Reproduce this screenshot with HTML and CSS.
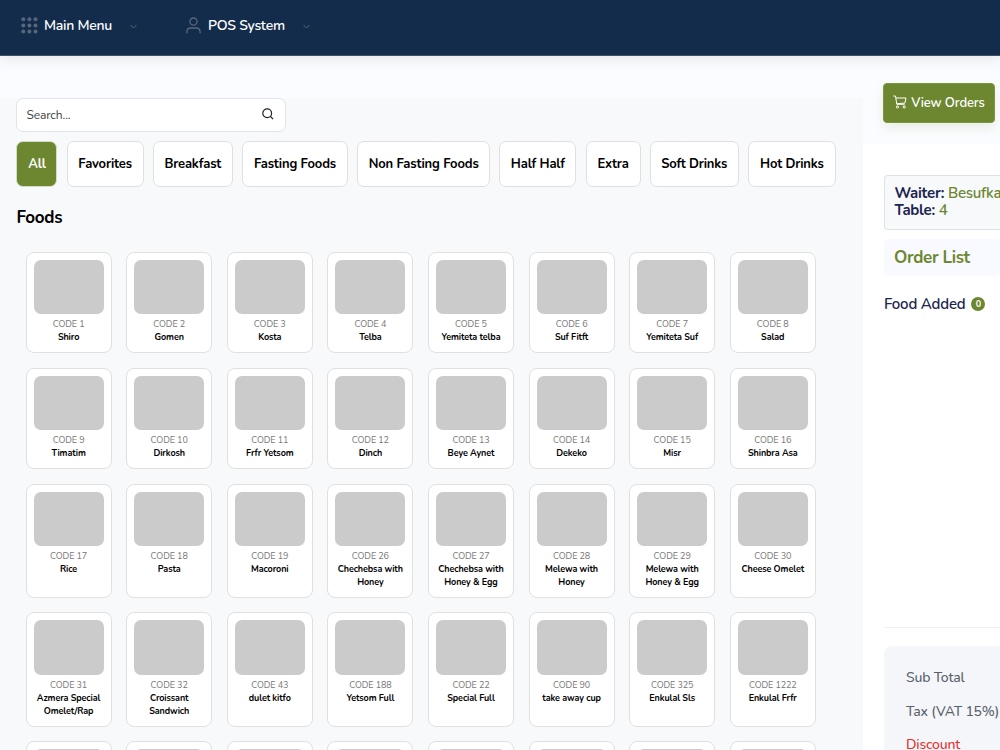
FILE: index.html
```html
<!DOCTYPE html>
<html lang="en">
<head>
  <meta charset="UTF-8">
  <meta name="viewport" content="width=device-width, initial-scale=1.0">
  <title>POS System</title>
  <link rel="stylesheet" href="styles.css">
</head>
<body>
  <header class="topbar">
    <a class="nav-item nav-menu">
      <svg class="nav-icon" width="17" height="17" viewBox="0 0 17 17" fill="currentColor">
        <circle cx="2.3" cy="2.3" r="2"/><circle cx="8.4" cy="2.3" r="2"/><circle cx="14.5" cy="2.3" r="2"/>
        <circle cx="2.3" cy="8.4" r="2"/><circle cx="8.4" cy="8.4" r="2"/><circle cx="14.5" cy="8.4" r="2"/>
        <circle cx="2.3" cy="14.5" r="2"/><circle cx="8.4" cy="14.5" r="2"/><circle cx="14.5" cy="14.5" r="2"/>
      </svg>
      <span class="nav-text">Main Menu</span>
      <svg class="chevron" width="7" height="5" viewBox="0 0 7 5" fill="none" stroke="currentColor"><path d="M.5 1l3 3 3-3"/></svg>
    </a>
    <a class="nav-item nav-pos">
      <svg class="nav-icon" width="15" height="17" viewBox="0 0 15 17" fill="none" stroke="currentColor" stroke-width="1.3">
        <circle cx="7.5" cy="4.6" r="3.6"/>
        <path d="M.9 16.2v-1.4a4 4 0 0 1 4-3.8h5.2a4 4 0 0 1 4 3.8v1.4"/>
      </svg>
      <span class="nav-text">POS System</span>
      <svg class="chevron" width="7" height="5" viewBox="0 0 7 5" fill="none" stroke="currentColor"><path d="M.5 1l3 3 3-3"/></svg>
    </a>
  </header>

  <div class="page">
    <main class="menu">
      <div class="search">
        <span>Search...</span>
        <svg width="12" height="12" viewBox="0 0 12 12" fill="none" stroke="#222" stroke-width="1.2">
          <circle cx="5.2" cy="5.2" r="4.4"/><path d="M8.5 8.5l2.6 2.6"/>
        </svg>
      </div>

      <div class="tabs">
        <button class="tab active">All</button>
        <button class="tab">Favorites</button>
        <button class="tab">Breakfast</button>
        <button class="tab">Fasting Foods</button>
        <button class="tab">Non Fasting Foods</button>
        <button class="tab">Half Half</button>
        <button class="tab">Extra</button>
        <button class="tab">Soft Drinks</button>
        <button class="tab">Hot Drinks</button>
      </div>

      <h1 class="menu-title">Foods</h1>
      <div class="foods" id="foods"></div>
    </main>

    <aside class="sidebar">
      <div class="actions">
        <button class="view-orders">
          <svg width="14" height="14" viewBox="0 0 14 14" fill="none" stroke="#fff" stroke-width="1">
            <path d="M.4 1h2.1l1.3 8.3h7.8M3 3h10l-1.1 5.1-8.2.6"/>
            <circle cx="4.4" cy="11.9" r="1.1"/><circle cx="11.2" cy="11.9" r="1.1"/>
          </svg>
          <span>View Orders</span>
        </button>
      </div>
      <div class="order">
        <div class="waiter">
          <div>Waiter: <span>Besufkad</span></div>
          <div>Table: <span>4</span></div>
        </div>
        <h2 class="order-title">Order List</h2>
        <div class="added">Food Added <span class="badge">0</span></div>
        <div class="totals">
          <div>Sub Total</div>
          <div class="tax">Tax (VAT 15%)</div>
          <div class="discount">Discount</div>
        </div>
      </div>
    </aside>
  </div>

  <script>
    const foods = [
      [1, 'Shiro'], [2, 'Gomen'], [3, 'Kosta'], [4, 'Telba'],
      [5, 'Yemiteta telba'], [6, 'Suf Fitft'], [7, 'Yemiteta Suf'], [8, 'Salad'],
      [9, 'Timatim'], [10, 'Dirkosh'], [11, 'Frfr Yetsom'], [12, 'Dinch'],
      [13, 'Beye Aynet'], [14, 'Dekeko'], [15, 'Misr'], [16, 'Shinbra Asa'],
      [17, 'Rice'], [18, 'Pasta'], [19, 'Macoroni'], [26, 'Chechebsa with Honey'],
      [27, 'Chechebsa with Honey & Egg'], [28, 'Melewa with Honey'], [29, 'Melewa with Honey & Egg'], [30, 'Cheese Omelet'],
      [31, 'Azmera Special Omelet/Rap'], [32, 'Croissant Sandwich'], [43, 'dulet kitfo'], [188, 'Yetsom Full'],
      [22, 'Special Full'], [90, 'take away cup'], [325, 'Enkulal Sls'], [1222, 'Enkulal Frfr']
    ];
    const grid = document.getElementById('foods');

    function addCard(code, name) {
      const card = document.createElement('div');
      card.className = 'card';
      card.innerHTML = '<div class="thumb"></div><div class="code"></div><div class="name"></div>';
      if (code) {
        card.querySelector('.code').textContent = 'CODE ' + code;
        card.querySelector('.name').textContent = name;
      }
      grid.appendChild(card);
    }

    foods.forEach(([code, name]) => addCard(code, name));
    // next row, still without data
    for (let i = 0; i < 8; i++) addCard();
  </script>
</body>
</html>
```
FILE: styles.css
```css
* {
  box-sizing: border-box;
}
body {
  margin: 0;
  height: 750px;
  overflow: hidden;
  background: #fbfcff;
  font-family: Nunito, Lato, 'Open Sans', sans-serif;
  color: #000;
}
button {
  font-family: inherit;
}
.topbar {
  position: relative;
  height: 56px;
  padding: 0 21px 4px;
  display: flex;
  align-items: center;
  background: #132c4b;
  border-bottom: 1px solid #3d5069;
  box-shadow: 0 2px 14px rgba(60, 60, 60, 0.13);
}
.nav-item {
  display: flex;
  align-items: center;
  color: #56677c;
}
.nav-menu {
  width: 165px;
}
.nav-text {
  margin: 0 18px 0 6px;
  color: #fff;
  font-size: 14px;
  font-weight: 600;
  letter-spacing: -0.25px;
  white-space: nowrap;
}
.nav-pos .nav-text {
  margin-left: 7px;
}
.chevron {
  margin-top: 2px;
}
.page {
  display: flex;
  height: 694px;
  overflow: hidden;
}
.menu {
  width: 863px;
  height: 652px;
  overflow: hidden;
  flex: none;
  margin-top: 42px;
  padding-left: 16.4px;
  background: #f8f9fb;
}
.search {
  width: 270px;
  height: 34px;
  padding: 0 11px 0 9px;
  display: flex;
  align-items: center;
  justify-content: space-between;
  background: #fff;
  border: 1px solid #e0e3e7;
  border-radius: 7px;
  font-size: 12px;
  letter-spacing: -0.1px;
  color: #444;
}
.search svg {
  margin-top: -3px;
}
.tabs {
  display: grid;
  grid-template-columns: 41px 77px 80px 106px 133px 77px 55px 89px 88px;
  column-gap: 9.2px;
  margin-top: 9px;
}
.tab {
  height: 46px;
  padding: 0 0 1px;
  background: #fff;
  border: 1px solid #e0e0e0;
  border-radius: 7px;
  font-size: 13px;
  font-weight: 700;
  letter-spacing: -0.15px;
  white-space: nowrap;
  color: #000;
}
.tab.active {
  background: #6c872f;
  border-color: #d5dcc6;
  color: #fff;
}
.menu-title {
  margin: 20px 0 0;
  font-size: 17px;
  line-height: 22px;
  font-weight: 700;
  letter-spacing: -0.3px;
}
.foods {
  display: grid;
  grid-template-columns: repeat(8, 86px);
  column-gap: 14.6px;
  row-gap: 14.8px;
  margin: 22.8px 0 0 9.2px;
}
.card {
  padding: 7px 7px 7.6px;
  background: #fff;
  border: 1px solid #e0e0e0;
  border-radius: 8px;
  text-align: center;
  min-height: 101px;
}
.thumb {
  height: 54.3px;
  background: #cbcbcb;
  border-radius: 7px;
}
.code {
  margin-top: 4px;
  font-size: 9px;
  line-height: 13.2px;
  letter-spacing: -0.1px;
  color: #777;
}
.name {
  margin: 0 -4px;
  padding: 0 5px;
  font-size: 9px;
  line-height: 13px;
  font-weight: 700;
  letter-spacing: -0.1px;
}
.sidebar {
  flex: 1;
  min-width: 0;
  display: flex;
  flex-direction: column;
}
.actions {
  flex: none;
  height: 88px;
  padding: 27px 0 0 20px;
}
.view-orders {
  width: 112px;
  height: 40px;
  padding: 0;
  display: flex;
  align-items: center;
  justify-content: center;
  gap: 4px;
  background: #6c872f;
  border: 1px solid #7c9541;
  border-radius: 4px;
  box-shadow: 0 5px 12px rgba(108, 135, 47, 0.12);
  color: #fff;
  font-size: 13px;
  font-weight: 600;
  letter-spacing: -0.1px;
  white-space: nowrap;
}
.view-orders svg {
  margin-top: -2px;
}
.order {
  flex: 1;
  min-height: 0;
  overflow: hidden;
  padding: 31px 0 0 21px;
  background: #fff;
}
.waiter {
  height: 55px;
  padding: 9px 0 9px 9.5px;
  background: #f7f9fb;
  border: 1px solid #dfe2e5;
  border-right: 0;
  border-radius: 4px 0 0 4px;
  font-size: 15px;
  line-height: 17px;
  font-weight: 700;
  letter-spacing: -0.25px;
  color: #1c2550;
  white-space: nowrap;
  overflow: hidden;
}
.waiter span {
  font-weight: 600;
  color: #6c872f;
}
.order-title {
  height: 37px;
  margin: 9px 0 0;
  padding-left: 10px;
  background: #f9faff;
  border-radius: 5px;
  font-size: 17px;
  line-height: 37px;
  font-weight: 700;
  letter-spacing: -0.35px;
  color: #6c872f;
}
.added {
  display: flex;
  align-items: center;
  gap: 6px;
  height: 20px;
  margin-top: 18px;
  font-size: 15px;
  font-weight: 600;
  letter-spacing: -0.2px;
  color: #1c2550;
}
.badge {
  width: 14px;
  height: 14px;
  border-radius: 50%;
  background: #6c872f;
  color: #fff;
  font-size: 9px;
  font-weight: 700;
  letter-spacing: 0;
  line-height: 14px;
  text-align: center;
}
.totals {
  position: relative;
  height: 130px;
  margin-top: 332px;
  padding: 22px 0 0 22px;
  background: #f4f6fa;
  border-radius: 8px 0 0 8px;
  font-size: 14px;
  line-height: 20px;
  font-weight: 500;
  letter-spacing: -0.2px;
  color: #5a626b;
  white-space: nowrap;
}
/* divider above the totals */
.totals::before {
  content: "";
  position: absolute;
  top: -19px;
  left: 0;
  right: 0;
  border-top: 1px solid #eff0f2;
}
.totals div + div {
  margin-top: 13.5px;
}
.totals .discount {
  color: #e5322d;
}
```
